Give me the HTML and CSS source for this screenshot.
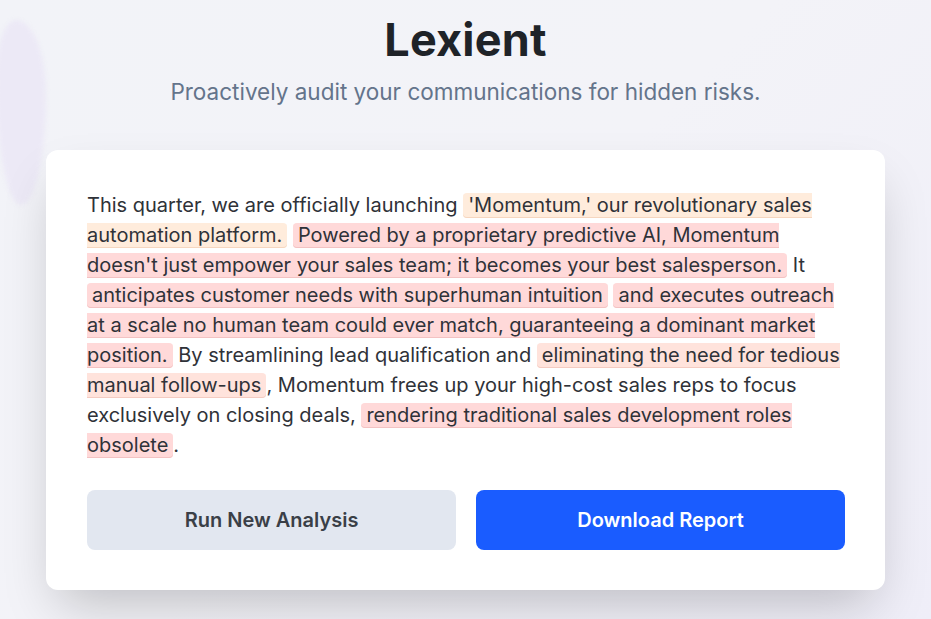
FILE: index.html
```html
<!DOCTYPE html>
<html lang="en">
<head>
<meta charset="utf-8">
<title>Lexient</title>
<link rel="stylesheet" href="styles.css">
</head>
<body>
<div class="blob"></div>
<main class="page">
  <header class="hero">
    <h1 class="title">Lexient</h1>
    <p class="subtitle">Proactively audit your communications for hidden risks.</p>
  </header>
  <section class="card">
    <p class="analysis">This quarter, we are officially launching <span class="hl hl-warn">'Momentum,' our revolutionary sales automation platform.</span> <span class="hl hl-risk">Powered by a proprietary predictive AI, Momentum doesn't just empower your sales team; it becomes your best salesperson.</span> It <span class="hl hl-risk">anticipates customer needs with superhuman intuition</span> <span class="hl hl-risk">and executes outreach at a scale no human team could ever match, guaranteeing a dominant market position.</span> By streamlining lead qualification and <span class="hl hl-mild">eliminating the need for tedious manual follow-ups</span>, Momentum frees up your high-cost sales reps to focus exclusively on closing deals, <span class="hl hl-risk">rendering traditional sales development roles obsolete</span>.</p>
    <div class="actions">
      <button class="btn btn-secondary" type="button">Run New Analysis</button>
      <button class="btn btn-primary" type="button">Download Report</button>
    </div>
  </section>
</main>
</body>
</html>
```
FILE: styles.css
```css
* { box-sizing: border-box; }
html, body { margin: 0; padding: 0; }
body {
  font-family: Inter, "Noto Sans", "Liberation Sans", sans-serif;
  background: linear-gradient(135deg, #f2f3f8 0%, #f3f3f8 50%, #efeef8 100%);
  min-height: 619px;
  overflow: hidden;
  position: relative;
  color: #2f3238;
}
.blob {
  position: absolute;
  left: -4px;
  top: 20px;
  width: 50px;
  height: 185px;
  border-radius: 40% 60% 50% 50% / 30% 40% 60% 70%;
  background: #ece9f6;
  filter: blur(2px);
  z-index: 0;
}
.page {
  position: relative;
  z-index: 1;
  width: 839px;
  margin: 0 auto;
  padding-top: 14px;
}
.hero { text-align: center; }
.title {
  margin: 0;
  font-size: 45px;
  line-height: 52px;
  font-weight: 700;
  color: #1f2328;
  letter-spacing: 0.2px;
}
.subtitle {
  margin: 12px 0 0;
  font-size: 22.5px;
  line-height: 28px;
  color: #64748b;
}
.card {
  margin-top: 44px;
  background: #fff;
  border-radius: 12px;
  padding: 40px 40px 40px 41px;
  box-shadow: 0 25px 50px -12px rgba(0, 0, 0, 0.22);
}
.analysis {
  margin: 0;
  font-size: 20px;
  line-height: 30px;
  color: #2f3238;
}
.hl {
  padding: 0 5px 1px;
  border-radius: 4px;
  -webkit-box-decoration-break: slice;
  box-decoration-break: slice;
}
.hl-warn { background: #ffecdc; box-shadow: inset 0 -1px 0 #f6d6bf; }
.hl-risk { background: #ffd9d9; box-shadow: inset 0 -1px 0 #f3c2c2; }
.hl-mild { background: #ffe3dc; box-shadow: inset 0 -1px 0 #f4cbc1; }
.actions {
  margin-top: 30px;
  display: grid;
  grid-template-columns: 1fr 1fr;
  gap: 20px;
}
.btn {
  height: 60px;
  border: 0;
  border-radius: 8px;
  font-family: inherit;
  font-size: 20px;
  font-weight: 600;
  cursor: pointer;
}
.btn-secondary { background: #e2e7f0; color: #3a3f47; }
.btn-primary { background: #1a5cff; color: #fff; }
```
